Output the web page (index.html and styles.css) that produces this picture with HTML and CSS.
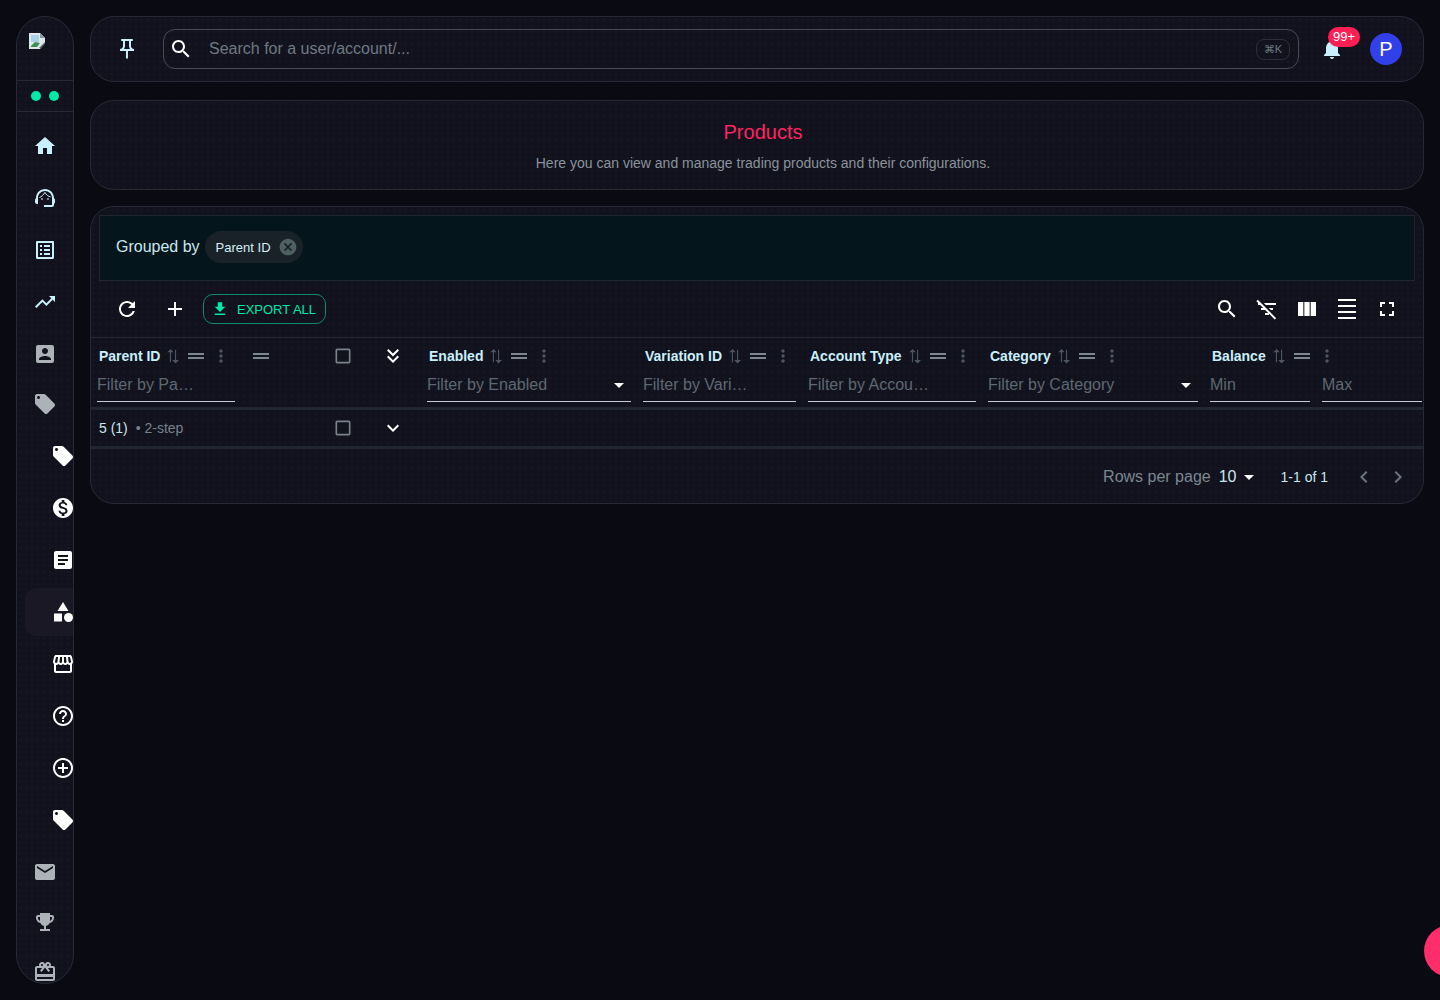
FILE: index.html
```html
<!DOCTYPE html>
<html lang="en">

<head>
    <meta charset="UTF-8">
    <title>Products</title>
    <link rel="stylesheet" href="styles.css">
</head>

<body>
    <svg class="sprite" xmlns="http://www.w3.org/2000/svg">
        <symbol id="home" viewBox="0 0 24 24"><path d="M10 20v-6h4v6h5v-8h3L12 3 2 12h3v8z"/></symbol>
        <symbol id="agent" viewBox="0 0 24 24"><path d="M21 12.22C21 6.73 16.74 3 12 3c-4.69 0-9 3.65-9 9.28-.6.34-1 .98-1 1.72v2c0 1.1.9 2 2 2h1v-6.1c0-3.87 3.13-7 7-7s7 3.13 7 7V19h-8v2h8c1.1 0 2-.9 2-2v-1.22c.59-.31 1-.92 1-1.64v-2.3c0-.7-.41-1.31-1-1.62z"/><circle cx="9" cy="13" r="1" opacity=".7"/><circle cx="15" cy="13" r="1" opacity=".7"/><path d="M6.4 11.6c2.3-1 4.1-2.8 5.5-5.2 1.3 2.4 3.3 4 5.7 4.5" fill="none" stroke="currentColor" stroke-width="1"/></symbol>
        <symbol id="list" viewBox="0 0 24 24"><path d="M19 5v14H5V5h14m1.1-2H3.9c-.5 0-.9.4-.9.9v16.2c0 .4.4.9.9.9h16.2c.4 0 .9-.5.9-.9V3.9c0-.5-.5-.9-.9-.9zM11 7h6v2h-6V7zm0 4h6v2h-6v-2zm0 4h6v2h-6zM7 7h2v2H7zm0 4h2v2H7zm0 4h2v2H7z"/></symbol>
        <symbol id="trend" viewBox="0 0 24 24"><path d="M16 6l2.29 2.29-4.88 4.88-4-4L2 16.59 3.41 18l6-6 4 4 6.3-6.29L22 12V6z"/></symbol>
        <symbol id="account" viewBox="0 0 24 24"><path d="M3 5v14c0 1.1.89 2 2 2h14c1.1 0 2-.9 2-2V5c0-1.1-.9-2-2-2H5c-1.11 0-2 .9-2 2zm12 4c0 1.66-1.34 3-3 3s-3-1.34-3-3 1.34-3 3-3 3 1.34 3 3zm-9 8c0-2 4-3.1 6-3.1s6 1.1 6 3.1v1H6v-1z"/></symbol>
        <symbol id="tag" viewBox="0 0 24 24"><path d="M21.41 11.58l-9-9C12.05 2.22 11.55 2 11 2H4c-1.1 0-2 .9-2 2v7c0 .55.22 1.05.59 1.42l9 9c.36.36.86.58 1.41.58.55 0 1.05-.22 1.41-.59l7-7c.37-.36.59-.86.59-1.41 0-.55-.23-1.06-.59-1.42zM5.5 7C4.67 7 4 6.33 4 5.5S4.67 4 5.5 4 7 4.67 7 5.5 6.33 7 5.5 7z"/></symbol>
        <symbol id="money" viewBox="0 0 24 24"><path d="M12 2C6.48 2 2 6.48 2 12s4.48 10 10 10 10-4.48 10-10S17.52 2 12 2zm1.41 16.09V20h-2.67v-1.93c-1.71-.36-3.16-1.46-3.27-3.4h1.96c.1 1.05.82 1.87 2.65 1.87 1.96 0 2.4-.98 2.4-1.59 0-.83-.44-1.61-2.67-2.14-2.48-.6-4.18-1.62-4.18-3.67 0-1.72 1.39-2.84 3.11-3.21V4h2.67v1.95c1.86.45 2.79 1.86 2.85 3.39H14.3c-.05-1.11-.64-1.87-2.22-1.87-1.5 0-2.4.68-2.4 1.64 0 .84.65 1.39 2.67 1.91s4.18 1.39 4.18 3.91c-.01 1.83-1.38 2.83-3.12 3.16z"/></symbol>
        <symbol id="article" viewBox="0 0 24 24"><path d="M19 3H5c-1.1 0-2 .9-2 2v14c0 1.1.9 2 2 2h14c1.1 0 2-.9 2-2V5c0-1.1-.9-2-2-2zm-5 14H7v-2h7v2zm3-4H7v-2h10v2zm0-4H7V7h10v2z"/></symbol>
        <symbol id="category" viewBox="0 0 24 24"><path d="M12 2l-5.5 9h11z"/><circle cx="17.5" cy="17.5" r="4.5"/><path d="M3 13.5h8v8H3z"/></symbol>
        <symbol id="store" viewBox="0 0 24 24"><path d="M21.9 8.89l-1.05-4.37c-.22-.9-1-1.52-1.91-1.52H5.05c-.9 0-1.69.63-1.9 1.52L2.1 8.89c-.24 1.02-.02 2.06.62 2.88.08.11.19.19.28.29V19c0 1.1.9 2 2 2h14c1.1 0 2-.9 2-2v-6.94c.09-.09.2-.18.28-.28.64-.82.87-1.87.62-2.89zm-2.99-3.9l1.05 4.37c.1.42.01.84-.25 1.17-.14.18-.44.47-.94.47-.61 0-1.14-.49-1.21-1.14L16.98 5l1.93-.01zM13 5h1.96l.54 4.52c.05.39-.07.78-.33 1.07-.22.26-.54.41-.95.41-.67 0-1.22-.59-1.22-1.31V5zM8.49 9.52L9.04 5H11v4.69c0 .72-.55 1.31-1.29 1.31-.34 0-.65-.15-.89-.41-.25-.29-.37-.68-.33-1.07zm-4.45-.16L5.05 5h1.97l-.58 4.86c-.08.65-.6 1.14-1.21 1.14-.49 0-.8-.29-.93-.47-.27-.32-.36-.75-.26-1.17zM5 19v-6.03c.08.01.15.03.23.03.87 0 1.66-.36 2.24-.95.6.6 1.4.95 2.31.95.87 0 1.65-.36 2.23-.93.59.57 1.39.93 2.29.93.84 0 1.64-.35 2.24-.95.58.59 1.37.95 2.24.95.08 0 .15-.02.23-.03V19H5z"/></symbol>
        <symbol id="help" viewBox="0 0 24 24"><path d="M11 18h2v-2h-2v2zm1-16C6.48 2 2 6.48 2 12s4.48 10 10 10 10-4.48 10-10S17.52 2 12 2zm0 18c-4.41 0-8-3.59-8-8s3.59-8 8-8 8 3.59 8 8-3.59 8-8 8zm0-14c-2.21 0-4 1.79-4 4h2c0-1.1.9-2 2-2s2 .9 2 2c0 2-3 1.75-3 5h2c0-2.25 3-2.5 3-5 0-2.21-1.79-4-4-4z"/></symbol>
        <symbol id="addcircle" viewBox="0 0 24 24"><path d="M13 7h-2v4H7v2h4v4h2v-4h4v-2h-4V7zm-1-5C6.49 2 2 6.49 2 12s4.49 10 10 10 10-4.49 10-10S17.51 2 12 2zm0 18c-4.41 0-8-3.59-8-8s3.59-8 8-8 8 3.59 8 8-3.59 8-8 8z"/></symbol>
        <symbol id="mail" viewBox="0 0 24 24"><path d="M20 4H4c-1.1 0-1.99.9-1.99 2L2 18c0 1.1.9 2 2 2h16c1.1 0 2-.9 2-2V6c0-1.1-.9-2-2-2zm0 4l-8 5-8-5V6l8 5 8-5v2z"/></symbol>
        <symbol id="trophy" viewBox="0 0 24 24"><path d="M19 5h-2V3H7v2H5c-1.1 0-2 .9-2 2v1c0 2.55 1.92 4.63 4.39 4.94.63 1.5 1.98 2.63 3.61 2.96V19H7v2h10v-2h-4v-3.1c1.63-.33 2.98-1.46 3.61-2.96C19.08 12.63 21 10.55 21 8V7c0-1.1-.9-2-2-2zM5 8V7h2v3.82C5.84 10.4 5 9.3 5 8zm14 0c0 1.3-.84 2.4-2 2.82V7h2v1z"/></symbol>
        <symbol id="gift" viewBox="0 0 24 24"><path d="M20 6h-2.18c.11-.31.18-.65.18-1 0-1.66-1.34-3-3-3-1.05 0-1.96.54-2.5 1.35l-.5.67-.5-.68C10.96 2.54 10.05 2 9 2 7.34 2 6 3.34 6 5c0 .35.07.69.18 1H4c-1.11 0-1.99.89-1.99 2L2 19c0 1.11.89 2 2 2h16c1.11 0 2-.89 2-2V8c0-1.11-.89-2-2-2zm-5-2c.55 0 1 .45 1 1s-.45 1-1 1-1-.45-1-1 .45-1 1-1zM9 4c.55 0 1 .45 1 1s-.45 1-1 1-1-.45-1-1 .45-1 1-1zm11 15H4v-2h16v2zm0-5H4V8h5.08L7 10.83 8.62 12 12 7.4l3.38 4.6L17 10.83 14.92 8H20v6z"/></symbol>
        <symbol id="pin" viewBox="0 0 24 24"><path d="M14 4v5c0 1.12.37 2.16 1 3H9c.65-.86 1-1.9 1-3V4h4m3-2H7c-.55 0-1 .45-1 1s.45 1 1 1h1v5c0 1.66-1.34 3-3 3v2h5.97v7l1 1 1-1v-7H19v-2c-1.66 0-3-1.34-3-3V4h1c.55 0 1-.45 1-1s-.45-1-1-1z"/></symbol>
        <symbol id="search" viewBox="0 0 24 24"><path d="M15.5 14h-.79l-.28-.27C15.41 12.59 16 11.11 16 9.5 16 5.91 13.09 3 9.5 3S3 5.91 3 9.5 5.91 16 9.5 16c1.61 0 3.09-.59 4.23-1.57l.27.28v.79l5 4.99L20.49 19l-4.99-5zm-6 0C7.01 14 5 11.99 5 9.5S7.01 5 9.5 5 14 7.01 14 9.5 11.99 14 9.5 14z"/></symbol>
        <symbol id="bell" viewBox="0 0 24 24"><path d="M12 22c1.1 0 2-.9 2-2h-4c0 1.1.89 2 2 2zm6-6v-5c0-3.07-1.64-5.64-4.5-6.32V4c0-.83-.67-1.5-1.5-1.5s-1.5.67-1.5 1.5v.68C7.63 5.36 6 7.92 6 11v5l-2 2v1h16v-1l-2-2z"/></symbol>
        <symbol id="refresh" viewBox="0 0 24 24"><path d="M17.65 6.35C16.2 4.9 14.21 4 12 4c-4.42 0-7.99 3.58-7.99 8s3.57 8 7.99 8c3.73 0 6.84-2.55 7.73-6h-2.08c-.82 2.33-3.04 4-5.65 4-3.31 0-6-2.69-6-6s2.69-6 6-6c1.66 0 3.14.69 4.22 1.78L13 11h7V4l-2.35 2.35z"/></symbol>
        <symbol id="add" viewBox="0 0 24 24"><path d="M19 13h-6v6h-2v-6H5v-2h6V5h2v6h6v2z"/></symbol>
        <symbol id="download" viewBox="0 0 24 24"><path d="M19 9h-4V3H9v6H5l7 7 7-7zM5 18v2h14v-2H5z"/></symbol>
        <symbol id="filteroff" viewBox="0 0 24 24"><path d="M10.83 8H21V6H8.83l2 2zm5 5H18v-2h-4.17l2 2zM14 16.83V18h-4v-2h3.17l-3-3H6v-2h2.17l-3-3H3V6h.17L1.39 4.22 2.8 2.81l18.38 18.38-1.41 1.41L14 16.83z"/></symbol>
        <symbol id="columns" viewBox="0 0 24 24"><path d="M14.67 5v14H9.33V5h5.34zm1 14H21V5h-5.33v14zm-7.34 0V5H3v14h5.33z"/></symbol>
        <symbol id="density" viewBox="0 0 24 24"><path d="M3 2h18v2H3V2zm0 18h18v2H3v-2zm0-6h18v2H3v-2zm0-6h18v2H3V8z"/></symbol>
        <symbol id="fullscreen" viewBox="0 0 24 24"><path d="M7 14H5v5h5v-2H7v-3zm-2-4h2V7h3V5H5v5zm12 7h-3v2h5v-5h-2v3zM14 5v2h3v3h2V5h-5z"/></symbol>
        <symbol id="sort" viewBox="3 2 18 20"><path d="M16 17.01V4h-1.4v13.01H11L15.3 21.5l4.4-4.49H16zM9 3 4.6 7.2H8V20h1.4V7.2h3.4L9 3z"/></symbol>
        <symbol id="handle" viewBox="4 0 16 24"><path d="M20 9H4v2h16V9zM4 15h16v-2H4v2z"/></symbol>
        <symbol id="more" viewBox="0 0 24 24"><path d="M12 8c1.1 0 2-.9 2-2s-.9-2-2-2-2 .9-2 2 .9 2 2 2zm0 2c-1.1 0-2 .9-2 2s.9 2 2 2 2-.9 2-2-.9-2-2-2zm0 6c-1.1 0-2 .9-2 2s.9 2 2 2 2-.9 2-2-.9-2-2-2z"/></symbol>
        <symbol id="checkbox" viewBox="0 0 24 24"><path d="M19 5v14H5V5h14m0-2H5c-1.1 0-2 .9-2 2v14c0 1.1.9 2 2 2h14c1.1 0 2-.9 2-2V5c0-1.1-.9-2-2-2z"/></symbol>
        <symbol id="doubledown" viewBox="0 0 24 24"><path d="M18 6.41 16.59 5 12 9.58 7.41 5 6 6.41l6 6zM18 13l-1.41-1.41L12 16.17l-4.59-4.58L6 13l6 6z"/></symbol>
        <symbol id="down" viewBox="0 0 24 24"><path d="M16.59 8.59 12 13.17 7.41 8.59 6 10l6 6 6-6z"/></symbol>
        <symbol id="left" viewBox="0 0 24 24"><path d="M15.41 7.41 14 6l-6 6 6 6 1.41-1.41L10.83 12z"/></symbol>
        <symbol id="right" viewBox="0 0 24 24"><path d="M10 6 8.59 7.41 13.17 12l-4.58 4.59L10 18l6-6z"/></symbol>
        <symbol id="cancel" viewBox="0 0 24 24"><path d="M12 2C6.47 2 2 6.47 2 12s4.47 10 10 10 10-4.47 10-10S17.53 2 12 2zm5 13.59L15.59 17 12 13.41 8.41 17 7 15.59 10.59 12 7 8.41 8.41 7 12 10.59 15.59 7 17 8.41 13.41 12 17 15.59z"/></symbol>
        <symbol id="caret" viewBox="0 0 24 24"><path d="M7 10l5 5 5-5z"/></symbol>
    </svg>

    <div class="layout">
        <aside class="sidebar">
            <div class="logo">
                <svg class="broken" viewBox="0 0 16 16">
                    <path d="M0 0h11l5 5v5l-5 6H0z" fill="#dfe7ea"/>
                    <path d="M11 0l5 5h-5z" fill="#8d979d"/>
                    <path d="M2 2h8v7H2z" fill="#a9cfe9"/>
                    <path d="M2 13l4-4 5 1-3 4H2z" fill="#3f8f4f"/>
                    <path d="M10 15l6-6v2l-4 4z" fill="#55606a"/>
                </svg>
            </div>
            <div class="status">
                <span class="dot"></span>
                <span class="dot"></span>
            </div>
            <nav class="nav">
                <a class="nav-item blue"><svg class="icon"><use href="#home"/></svg></a>
                <a class="nav-item blue"><svg class="icon"><use href="#agent"/></svg></a>
                <a class="nav-item blue"><svg class="icon"><use href="#list"/></svg></a>
                <a class="nav-item blue"><svg class="icon"><use href="#trend"/></svg></a>
                <a class="nav-item grey"><svg class="icon"><use href="#account"/></svg></a>
                <a class="nav-item grey short"><svg class="icon"><use href="#tag"/></svg></a>
                <a class="nav-item sub"><svg class="icon"><use href="#tag"/></svg></a>
                <a class="nav-item sub"><svg class="icon"><use href="#money"/></svg></a>
                <a class="nav-item sub"><svg class="icon"><use href="#article"/></svg></a>
                <a class="nav-item sub active"><svg class="icon"><use href="#category"/></svg></a>
                <a class="nav-item sub"><svg class="icon"><use href="#store"/></svg></a>
                <a class="nav-item sub"><svg class="icon"><use href="#help"/></svg></a>
                <a class="nav-item sub"><svg class="icon"><use href="#addcircle"/></svg></a>
                <a class="nav-item sub"><svg class="icon"><use href="#tag"/></svg></a>
                <a class="nav-item grey"><svg class="icon"><use href="#mail"/></svg></a>
                <a class="nav-item grey shorter"><svg class="icon"><use href="#trophy"/></svg></a>
                <a class="nav-item grey"><svg class="icon"><use href="#gift"/></svg></a>
            </nav>
        </aside>

        <main class="main">
            <header class="card topbar">
                <svg class="icon pin"><use href="#pin"/></svg>
                <div class="search">
                    <svg class="icon white"><use href="#search"/></svg>
                    <span class="search-text">Search for a user/account/...</span>
                    <span class="kbd">⌘K</span>
                </div>
                <div class="bell">
                    <svg class="icon"><use href="#bell"/></svg>
                    <span class="badge">99+</span>
                </div>
                <div class="avatar">P</div>
            </header>

            <section class="card page-head">
                <h1>Products</h1>
                <p>Here you can view and manage trading products and their configurations.</p>
            </section>

            <section class="card table-card">
                <div class="group-bar">
                    <span>Grouped by</span>
                    <span class="chip">Parent ID <svg class="chip-x"><use href="#cancel"/></svg></span>
                </div>

                <div class="toolbar">
                    <svg class="icon white"><use href="#refresh"/></svg>
                    <svg class="icon white"><use href="#add"/></svg>
                    <button class="export"><svg class="icon-sm"><use href="#download"/></svg>EXPORT ALL</button>
                    <div class="toolbar-right">
                        <svg class="icon white"><use href="#search"/></svg>
                        <svg class="icon white"><use href="#filteroff"/></svg>
                        <svg class="icon white"><use href="#columns"/></svg>
                        <svg class="icon white"><use href="#density"/></svg>
                        <svg class="icon white"><use href="#fullscreen"/></svg>
                    </div>
                </div>

                <div class="cols head">
                    <div class="cell">
                        <div class="label">Parent ID<svg class="sort"><use href="#sort"/></svg><svg class="handle"><use href="#handle"/></svg><svg class="more"><use href="#more"/></svg></div>
                        <div class="filters"><div class="filter">Filter by Pa…</div></div>
                    </div>
                    <div class="cell group-col"><svg class="handle"><use href="#handle"/></svg></div>
                    <div class="cell check-col"><svg class="icon check"><use href="#checkbox"/></svg></div>
                    <div class="cell expand-col"><svg class="icon white"><use href="#doubledown"/></svg></div>
                    <div class="cell">
                        <div class="label">Enabled<svg class="sort"><use href="#sort"/></svg><svg class="handle"><use href="#handle"/></svg><svg class="more"><use href="#more"/></svg></div>
                        <div class="filters"><div class="filter">Filter by Enabled<svg class="caret"><use href="#caret"/></svg></div></div>
                    </div>
                    <div class="cell">
                        <div class="label">Variation ID<svg class="sort"><use href="#sort"/></svg><svg class="handle"><use href="#handle"/></svg><svg class="more"><use href="#more"/></svg></div>
                        <div class="filters"><div class="filter">Filter by Vari…</div></div>
                    </div>
                    <div class="cell">
                        <div class="label">Account Type<svg class="sort"><use href="#sort"/></svg><svg class="handle"><use href="#handle"/></svg><svg class="more"><use href="#more"/></svg></div>
                        <div class="filters"><div class="filter">Filter by Accou…</div></div>
                    </div>
                    <div class="cell">
                        <div class="label">Category<svg class="sort"><use href="#sort"/></svg><svg class="handle"><use href="#handle"/></svg><svg class="more"><use href="#more"/></svg></div>
                        <div class="filters"><div class="filter">Filter by Category<svg class="caret"><use href="#caret"/></svg></div></div>
                    </div>
                    <div class="cell last">
                        <div class="label">Balance<svg class="sort"><use href="#sort"/></svg><svg class="handle"><use href="#handle"/></svg><svg class="more"><use href="#more"/></svg></div>
                        <div class="filters"><div class="filter">Min</div><div class="filter">Max</div></div>
                    </div>
                </div>

                <div class="cols row">
                    <div class="cell row-name">5 (1) <span class="row-sub">• 2-step</span></div>
                    <div class="cell"></div>
                    <div class="cell check-col"><svg class="icon check"><use href="#checkbox"/></svg></div>
                    <div class="cell expand-col"><svg class="icon white"><use href="#down"/></svg></div>
                </div>

                <div class="pager">
                    <span class="rows-label">Rows per page</span>
                    <span class="rows-value">10<svg class="caret"><use href="#caret"/></svg></span>
                    <span class="range">1-1 of 1</span>
                    <svg class="icon page-arrow"><use href="#left"/></svg>
                    <svg class="icon page-arrow"><use href="#right"/></svg>
                </div>
            </section>
        </main>
    </div>

    <div class="fab"></div>
</body>

</html>
```

FILE: styles.css
```css
* {
    margin: 0;
    padding: 0;
    box-sizing: border-box;
    font-family: 'Liberation Sans', Arial, sans-serif;
}

body {
    height: 1000px;
    overflow: hidden;
    background: #0a0b12;
    color: #fff;
}

.sprite {
    display: none;
}

.layout {
    display: flex;
    gap: 16px;
    padding: 16px;
    height: 1000px;
}

.icon {
    display: block;
    width: 24px;
    height: 24px;
    flex: none;
    fill: currentColor;
}

.white {
    color: #fff;
}

.card,
.sidebar {
    background-color: #11121d;
    background-image: radial-gradient(rgba(255, 255, 255, .018) 1px, transparent 1px);
    background-size: 6px 6px;
    border: 1px solid #272a35;
}

.sidebar {
    width: 58px;
    height: 968px;
    flex: none;
    border-radius: 30px;
    overflow: hidden;
}

.logo {
    height: 64px;
    padding: 16px 0 0 12px;
    border-bottom: 1px solid #272a35;
}

.broken {
    display: block;
    width: 16px;
    height: 16px;
}

.status {
    display: flex;
    justify-content: center;
    gap: 8px;
    padding-top: 10px;
    height: 31px;
    border-bottom: 1px solid #272a35;
}

.dot {
    width: 10px;
    height: 10px;
    border-radius: 50%;
    background: #00e8a8;
}

.nav {
    padding-top: 8px;
}

.nav-item {
    display: flex;
    align-items: center;
    height: 52px;
    padding-left: 16px;
}

.nav-item.short {
    height: 48px;
    margin-bottom: 2px;
}

.nav-item.shorter {
    height: 48px;
}

.nav-item.blue {
    color: #c9f0fb;
}

.nav-item.grey {
    color: #adb1b8;
}

.nav-item.sub {
    color: #fff;
    padding-left: 34px;
}

.nav-item.active {
    position: relative;
    z-index: 0;
}

.nav-item.active::before {
    content: "";
    position: absolute;
    z-index: -1;
    left: 8px;
    right: 0;
    top: 2px;
    bottom: 2px;
    background: #1b1825;
    border-radius: 12px 0 0 12px;
}

.main {
    flex: 1;
    min-width: 0;
}

.topbar {
    display: flex;
    align-items: center;
    height: 66px;
    padding: 0 21px 0 24px;
    border-radius: 24px;
}

.pin {
    color: #c9f0fb;
}

.search {
    flex: 1;
    display: flex;
    align-items: center;
    height: 40px;
    margin-left: 24px;
    padding: 0 8px 0 5px;
    border: 1px solid #474b56;
    border-radius: 12px;
}

.search-text {
    flex: 1;
    margin-left: 16px;
    font-size: 16px;
    color: #6f7983;
}

.kbd {
    padding: 3px 7px;
    font-size: 11px;
    color: #6f7983;
    border: 1px solid #2b2e38;
    border-radius: 8px;
}

.bell {
    position: relative;
    margin-left: 21px;
    color: #c9f0fb;
}

.badge {
    position: absolute;
    left: 8px;
    top: -10px;
    height: 20px;
    padding: 0 5px;
    line-height: 20px;
    font-size: 13px;
    color: #fff;
    background: #ff1f55;
    border-radius: 10px;
}

.avatar {
    width: 32px;
    height: 32px;
    margin-left: 26px;
    line-height: 32px;
    text-align: center;
    font-size: 20px;
    background: #3140e8;
    border-radius: 50%;
}

.page-head {
    height: 90px;
    margin-top: 18px;
    padding: 19px 0 0 12px;
    text-align: center;
    border-radius: 24px;
}

.page-head h1 {
    font-size: 20px;
    line-height: 24px;
    font-weight: 400;
    color: #ff2462;
}

.page-head p {
    margin-top: 9px;
    font-size: 14px;
    line-height: 20px;
    color: #8b929b;
}

.table-card {
    height: 298px;
    margin-top: 16px;
    padding-top: 8px;
    border-radius: 24px;
    overflow: hidden;
}

.group-bar {
    display: flex;
    align-items: center;
    gap: 5px;
    height: 66px;
    margin: 0 8px;
    padding: 0 0 2px 16px;
    font-size: 16px;
    color: #c9e6ee;
    background: #04151b;
    border: 1px solid #20262f;
}

.chip {
    display: flex;
    align-items: center;
    gap: 7px;
    height: 32px;
    padding: 0 5px 0 11px;
    font-size: 13px;
    color: #d5eef5;
    background: #1a2229;
    border-radius: 16px;
}

.chip-x {
    width: 20px;
    height: 20px;
    fill: #4f6062;
}

.toolbar {
    display: flex;
    align-items: center;
    height: 56px;
    padding: 0 24px;
    gap: 24px;
}

.toolbar-right {
    display: flex;
    gap: 16px;
    margin-left: auto;
}

.export {
    display: flex;
    align-items: center;
    gap: 8px;
    height: 30px;
    margin-left: -8px;
    padding: 0 9px 0 7px;
    font-size: 13px;
    color: #00e8a8;
    background: none;
    border: 1px solid #0f8a6c;
    border-radius: 10px;
}

.icon-sm {
    width: 18px;
    height: 18px;
    fill: currentColor;
}

.cols {
    display: grid;
    grid-template-columns: 150px 78px 48px 54px 216px 165px 180px 222px 1fr;
}

.head {
    height: 73px;
    border-top: 1px solid #232732;
    border-bottom: 3px solid #212530;
}

.cell {
    padding: 6px 6px 0;
}

.label {
    display: flex;
    align-items: center;
    height: 24px;
    padding-left: 2px;
    font-size: 14px;
    font-weight: 700;
    color: #c9f0fb;
}

.sort {
    width: 14px;
    height: 16px;
    margin-left: 6px;
    fill: #4d5660;
}

.handle {
    display: block;
    width: 16px;
    height: 24px;
    margin-left: 8px;
    fill: #7d8792;
}

.more {
    width: 20px;
    height: 20px;
    margin-left: 7px;
    fill: #4d5660;
}

.filters {
    display: flex;
    gap: 12px;
}

.filter {
    flex: 1;
    display: flex;
    align-items: center;
    justify-content: space-between;
    height: 34px;
    font-size: 16px;
    color: #5f6872;
    border-bottom: 1px solid #c7cbd1;
    white-space: nowrap;
}

.caret {
    width: 24px;
    height: 24px;
    fill: #fff;
}

.last {
    padding-right: 1px;
}

.group-col {
    padding-left: 12px;
}

.group-col .handle {
    margin-left: 0;
}

.check-col {
    padding: 8px 0 0 14px;
}

.check {
    width: 20px;
    height: 20px;
    color: #7a8189;
}

.expand-col {
    padding-left: 14px;
}

.row {
    height: 39px;
    border-bottom: 3px solid #212530;
}

.row .cell {
    padding-top: 6px;
}

.row .check-col {
    padding-top: 8px;
}

.row-name {
    padding-left: 8px !important;
    font-size: 14px;
    line-height: 24px;
    color: #c9e6ee;
    white-space: nowrap;
}

.row-sub {
    margin-left: 4px;
    color: #77828b;
}

.pager {
    display: flex;
    align-items: center;
    justify-content: flex-end;
    height: 56px;
    padding-right: 13px;
}

.rows-label {
    font-size: 16px;
    color: #7c8791;
}

.rows-value {
    display: flex;
    align-items: center;
    margin-left: 8px;
    font-size: 16px;
    color: #c9e6ee;
}

.range {
    margin-left: 20px;
    margin-right: 14px;
    font-size: 14px;
    color: #c9e6ee;
}

.page-arrow {
    margin-left: 10px;
    color: #6b737c;
}

.fab {
    position: fixed;
    left: 1424px;
    top: 925px;
    width: 52px;
    height: 52px;
    background: #ff2d6a;
    border-radius: 50%;
}
```
